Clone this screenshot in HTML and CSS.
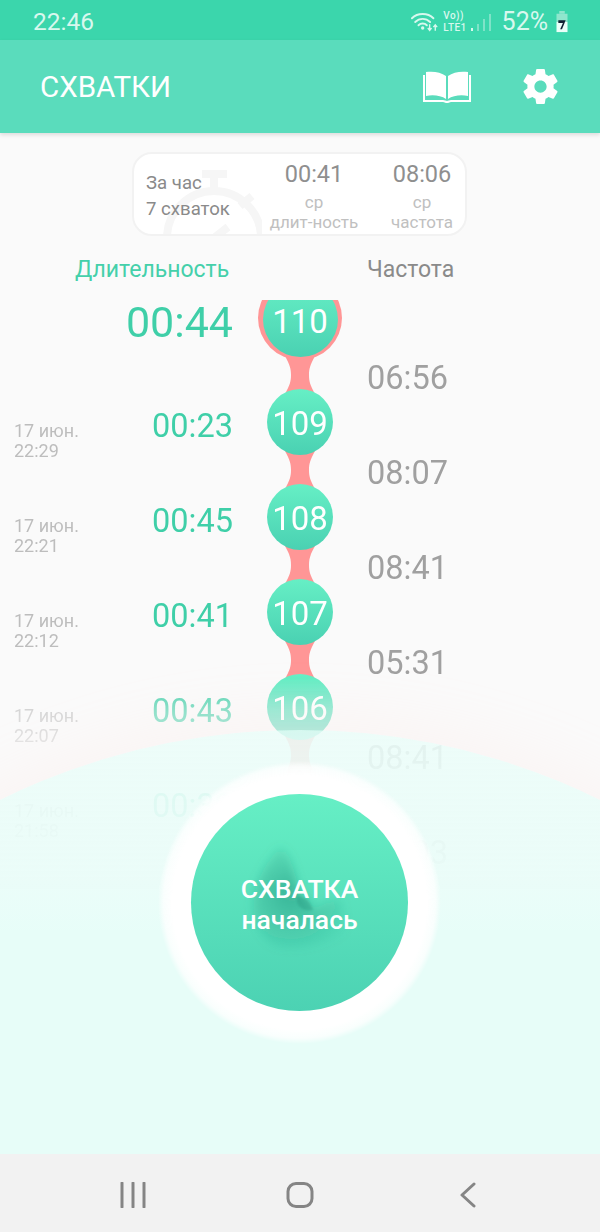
FILE: index.html
```html
<!DOCTYPE html>
<html lang="ru">
<head>
<meta charset="utf-8">
<title>Схватки</title>
<link rel="stylesheet" href="styles.css">
</head>
<body>
<div class="screen">
  <header class="status">
    <span class="clock">22:46</span>
    <div class="status-right">
      <svg class="wifi" viewBox="0 0 30 22"><g fill="none" stroke="#d8f8ee" stroke-width="2" stroke-linecap="round"><path d="M1 7.500C7 1.500 18 1.500 24 7.500"/><path d="M4.500 11.500C9 7 16 7 20.500 11.500"/><path d="M8 15C10.500 12.500 14.500 12.500 17 15"/></g><circle cx="12.500" cy="18" r="1.800" fill="#d8f8ee"/><path d="M20 14v6m-2-2 2 2.500 2-2.500M26 21v-6m-2 2 2-2.500 2 2.500" fill="none" stroke="#d8f8ee" stroke-width="1.500"/></svg>
      <div class="volte"><span>Vo))</span><span>LTE1</span></div>
      <div class="signal"><i class="b1"></i><i class="b2"></i><i class="b3"></i><i class="b4"></i></div>
      <span class="pct">52%</span>
      <svg class="battery" viewBox="0 0 14 24"><rect x="4" y="0" width="6" height="3" fill="#8fe6cd"/><rect x="1" y="3" width="12" height="9" fill="#8fe6cd"/><rect x="1" y="12" width="12" height="11" fill="#eafff8"/><path d="M3 10H11L7 20H5L8 13H3Z" fill="#123"/></svg>
    </div>
  </header>

  <div class="appbar">
    <h1 class="title">СХВАТКИ</h1>
    <svg class="book" viewBox="0 0 48 32"><path d="M3 1C10 0 18 1 23 5V28C18 24.500 10 23.500 3 25ZM45 1C38 0 30 1 25 5V28C30 24.500 38 23.500 45 25Z" fill="#fff"/><path d="M1 4V30H20C21.500 30 22.500 31 24 31S26.500 30 28 30H47V4" fill="none" stroke="#fff" stroke-width="2"/></svg>
    <svg class="gear" viewBox="2 2 20 20"><path fill="#fff" d="M19.430 12.980c.04-.32.07-.64.07-.98s-.03-.66-.07-.98l2.110-1.650c.19-.15.24-.42.12-.64l-2-3.460c-.12-.22-.39-.3-.61-.22l-2.490 1c-.52-.4-1.080-.73-1.690-.98l-.38-2.650C14.460 2.180 14.250 2 14 2h-4c-.25 0-.46.18-.49.420l-.38 2.650c-.61.25-1.170.59-1.690.98l-2.490-1c-.23-.09-.49 0-.61.22l-2 3.460c-.13.22-.07.49.12.64l2.110 1.650c-.04.32-.07.65-.07.98s.03.66.07.98l-2.110 1.650c-.19.15-.24.42-.12.64l2 3.460c.12.22.39.3.61.22l2.490-1c.52.4 1.080.73 1.690.98l.38 2.650c.03.24.24.42.49.42h4c.25 0 .46-.18.49-.42l.38-2.650c.61-.25 1.170-.59 1.690-.98l2.490 1c.23.09.49 0 .61-.22l2-3.460c.12-.22.07-.49-.12-.64l-2.110-1.650zM12 15.500c-1.930 0-3.500-1.570-3.500-3.500s1.570-3.500 3.500-3.500 3.500 1.570 3.500 3.500-1.570 3.500-3.500 3.500z"/></svg>
  </div>

  <main class="main">
    <section class="summary">
      <svg class="watch" viewBox="0 0 100 84"><g fill="none" stroke="#f6f6f6" stroke-width="8"><circle cx="52" cy="84" r="47"/><path d="M40 20H65M52 20V36M78 52 90 42"/><path d="M52 84 66 73"/></g></svg>
      <div class="sum-hour"><span>За час</span><span>7 схваток</span></div>
      <div class="sum-col sum-dur"><b>00:41</b><span>ср</span><span>длит-ность</span></div>
      <div class="sum-col sum-freq"><b>08:06</b><span>ср</span><span>частота</span></div>
    </section>

    <div class="heads">
      <span class="head-dur">Длительность</span>
      <span class="head-freq">Частота</span>
    </div>

    <div class="timeline">
      <div class="col-left">
        <div class="row first"><span class="dur big">00:44</span></div>
        <div class="row"><div class="date"><span>17 июн.</span><span>22:29</span></div><span class="dur">00:23</span></div>
        <div class="row"><div class="date"><span>17 июн.</span><span>22:21</span></div><span class="dur">00:45</span></div>
        <div class="row"><div class="date"><span>17 июн.</span><span>22:12</span></div><span class="dur">00:41</span></div>
        <div class="row"><div class="date"><span>17 июн.</span><span>22:07</span></div><span class="dur">00:43</span></div>
        <div class="row"><div class="date"><span>17 июн.</span><span>21:58</span></div><span class="dur">00:39</span></div>
      </div>
      <div class="col-track">
        <div class="halo"><div class="bubble large">110</div></div>
        <svg class="link" viewBox="0 0 40 38"><path d="M5 0C10 9 11 13 11 19S10 29 5 38H35C30 29 29 25 29 19S30 9 35 0Z"/></svg>
        <div class="bubble">109</div>
        <svg class="link" viewBox="0 0 40 38"><path d="M5 0C10 9 11 13 11 19S10 29 5 38H35C30 29 29 25 29 19S30 9 35 0Z"/></svg>
        <div class="bubble">108</div>
        <svg class="link" viewBox="0 0 40 38"><path d="M5 0C10 9 11 13 11 19S10 29 5 38H35C30 29 29 25 29 19S30 9 35 0Z"/></svg>
        <div class="bubble">107</div>
        <svg class="link" viewBox="0 0 40 38"><path d="M5 0C10 9 11 13 11 19S10 29 5 38H35C30 29 29 25 29 19S30 9 35 0Z"/></svg>
        <div class="bubble">106</div>
        <svg class="link" viewBox="0 0 40 38"><path d="M5 0C10 9 11 13 11 19S10 29 5 38H35C30 29 29 25 29 19S30 9 35 0Z"/></svg>
      </div>
      <div class="col-right">
        <span>06:56</span><span>08:07</span><span>08:41</span><span>05:31</span><span>08:41</span><span>06:03</span>
      </div>
    </div>

    <div class="wash"></div>

    <button class="start">
      <span class="start-inner">
        <svg class="shape" viewBox="0 0 217 217"><defs><radialGradient id="dark" gradientUnits="userSpaceOnUse" cx="100" cy="100" r="68"><stop offset="0" stop-color="#1f8a74" stop-opacity=".5"/><stop offset=".5" stop-color="#1f8a74" stop-opacity=".22"/><stop offset="1" stop-color="#1f8a74" stop-opacity="0"/></radialGradient><filter id="soft" x="-40%" y="-40%" width="180%" height="180%"><feGaussianBlur stdDeviation="5"/></filter><filter id="crisp" x="-40%" y="-40%" width="180%" height="180%"><feGaussianBlur stdDeviation="1.200"/></filter></defs><path d="M89 53C100 60 100 70 102 73 105 85 108 95 108 100 112 103 118 103 122 116 130 112 140 105 150 106L157 140C130 150 100 160 80 150 55 130 55 90 89 53Z" fill="url(#dark)" filter="url(#soft)"/><path d="M106 102C112 103 118 104 122 116 114 118 108 114 106 108Z" fill="#1f8a74" opacity=".3" filter="url(#crisp)"/></svg>
        <span class="start-text">СХВАТКА</span>
        <span class="start-text">началась</span>
      </span>
    </button>
  </main>

  <nav class="nav">
    <svg class="nav-recent" viewBox="0 0 26 26"><path d="M2 1V25M13 1V25M24 1V25" fill="none" stroke="#858585" stroke-width="3" stroke-linecap="round"/></svg>
    <svg class="nav-home" viewBox="0 0 28 26"><rect x="2" y="1.500" width="24" height="23" rx="8" fill="none" stroke="#858585" stroke-width="3"/></svg>
    <svg class="nav-back" viewBox="0 0 16 26"><path d="M14 2 2 13 14 24" fill="none" stroke="#858585" stroke-width="3" stroke-linecap="round" stroke-linejoin="round"/></svg>
  </nav>
</div>
</body>
</html>
```
FILE: styles.css
```css
* { box-sizing: border-box; }
html, body { margin: 0; padding: 0; }
body { font-family: Roboto, "Noto Sans", sans-serif; background: #fafafa; }
.screen { width: 600px; height: 1232px; display: flex; flex-direction: column; overflow: hidden; }

.status { height: 40px; flex: none; background: #3bd6ac; color: #d8f8ee; display: flex; align-items: center; justify-content: space-between; padding: 3px 31px 0 33px; position: relative; z-index: 3; }
.clock { font-size: 24.500px; }
.status-right { display: flex; align-items: center; }
.wifi { width: 28px; height: 21px; }
.volte { display: flex; flex-direction: column; font-size: 10px; line-height: 12px; margin-left: 4px; font-weight: 500; letter-spacing: .4px; }
.signal { display: flex; align-items: flex-end; gap: 4px; height: 18px; margin-left: 4px; }
.signal i { width: 2px; background: #7fe3c8; display: block; }
.signal .b1 { height: 3px; background: #d8f8ee; }
.signal .b2 { height: 7px; }
.signal .b3 { height: 12px; }
.signal .b4 { height: 17px; }
.pct { font-size: 25px; margin-left: 11px; }
.battery { width: 14px; height: 22px; margin-left: 7px; }

.appbar { height: 93px; flex: none; background: #5adcbc; display: flex; align-items: center; padding: 0 42px 0 40px; box-shadow: 0 2px 4px rgba(0,0,0,.12); position: relative; z-index: 3; }
.title { margin: 0; flex: 1; font-size: 29.500px; font-weight: 400; color: #fff; }
.book { width: 48px; height: 32px; margin-right: 52px; }
.gear { width: 35px; height: 35px; }

.main { flex: 1; position: relative; overflow: hidden; display: flex; flex-direction: column; background: #fafafa; }

.summary { margin: 19px 0 0 132px; width: 335px; height: 84px; flex: none; border: 2px solid #f2f2f2; border-radius: 20px; background: #fff; display: flex; position: relative; overflow: hidden; color: #8a8a8a; }
.watch { position: absolute; left: 28px; top: 0; width: 100px; height: 84px; }
.sum-hour { position: relative; display: flex; flex-direction: column; font-size: 18.600px; line-height: 26px; padding: 16px 0 0 12px; width: 134px; }
.sum-col { position: relative; display: flex; flex-direction: column; align-items: center; font-size: 17px; line-height: 20px; color: #c0c0c0; }
.sum-col b { font-size: 23.500px; font-weight: 400; line-height: 30px; color: #8f8f8f; margin: 5px 0 3px; }
.sum-dur { width: 92px; }
.sum-freq { margin-left: 19px; width: 86px; }

.heads { display: flex; height: 30px; margin-top: 18px; flex: none; font-size: 23px; line-height: 32px; }
.head-dur { color: #45d0aa; margin-left: 75px; width: 292px; }
.head-freq { color: #8a8a8a; }

.timeline { display: flex; margin-top: 16px; height: 640px; flex: none; -webkit-mask-image: linear-gradient(#000 378px, rgba(0,0,0,.6) 410px, rgba(0,0,0,.38) 440px, rgba(0,0,0,.2) 540px, rgba(0,0,0,.1) 640px); mask-image: linear-gradient(#000 378px, rgba(0,0,0,.6) 410px, rgba(0,0,0,.38) 440px, rgba(0,0,0,.2) 540px, rgba(0,0,0,.1) 640px); }
.col-left { width: 233px; flex: none; display: flex; flex-direction: column; }
.row { height: 95px; flex: none; display: flex; justify-content: space-between; padding: 31px 0 0 14px; }
.row.first { height: 76px; padding-top: 1px; justify-content: flex-end; }
.dur { font-size: 32.500px; line-height: 38px; color: #3fcfa8; }
.dur.big { font-size: 43px; line-height: 42px; }
.date { display: flex; flex-direction: column; font-size: 18px; line-height: 20px; color: #bdbdbd; padding-top: 14px; }

.col-track { width: 134px; flex: none; display: flex; flex-direction: column; align-items: center; overflow: hidden; }
.halo { width: 84px; height: 84px; flex: none; border-radius: 50%; background: #ff9696; margin-top: -24px; display: flex; justify-content: center; padding-top: 6px; position: relative; z-index: 1; }
.bubble { width: 66px; height: 66px; flex: none; border-radius: 50%; background: linear-gradient(#66efc5, #4ad1b2); color: #fff; font-size: 33px; display: flex; align-items: center; justify-content: center; padding-top: 3px; position: relative; z-index: 1; }
.bubble.large { width: 75px; height: 75px; }
.link { width: 40px; height: 38px; flex: none; margin: -4px 0 -5px; fill: #ff9696; display: block; }

.col-right { flex: 1; display: flex; flex-direction: column; padding-top: 59px; font-size: 32.500px; color: #a0a0a0; }
.col-right span { height: 95px; line-height: 38px; flex: none; }

.wash { position: absolute; left: -378px; top: 597px; width: 1356px; height: 1356px; border-radius: 50%; background: linear-gradient(rgba(231,253,248,.7), rgba(231,253,248,.8) 150px, #e7fdf8 200px); box-shadow: 0 -14px 60px rgba(255,215,205,.14); }

.start { position: absolute; left: 158px; top: 628px; width: 283px; height: 283px; padding: 0; border: 0; border-radius: 50%; background: radial-gradient(closest-side, #fff 90%, rgba(255,255,255,.75) 96%, rgba(255,255,255,0) 100%); display: flex; align-items: center; justify-content: center; font-family: inherit; }
.start-inner { width: 217px; height: 217px; position: relative; border-radius: 50%; background: linear-gradient(#66efc5, #4cd2b3); display: flex; flex-direction: column; align-items: center; justify-content: center; }
.shape { position: absolute; left: 0; top: 0; width: 217px; height: 217px; }
.start-text { position: relative; color: #fff; font-size: 26.500px; line-height: 31px; font-weight: 500; top: 1px; }

.nav { height: 78px; flex: none; background: #f2f2f2; display: flex; align-items: center; position: relative; z-index: 3; padding: 4px 0 0 120px; }
.nav-recent { width: 26px; height: 26px; }
.nav-home { width: 28px; height: 26px; margin-left: 140px; }
.nav-back { width: 16px; height: 26px; margin-left: 146px; }
```
